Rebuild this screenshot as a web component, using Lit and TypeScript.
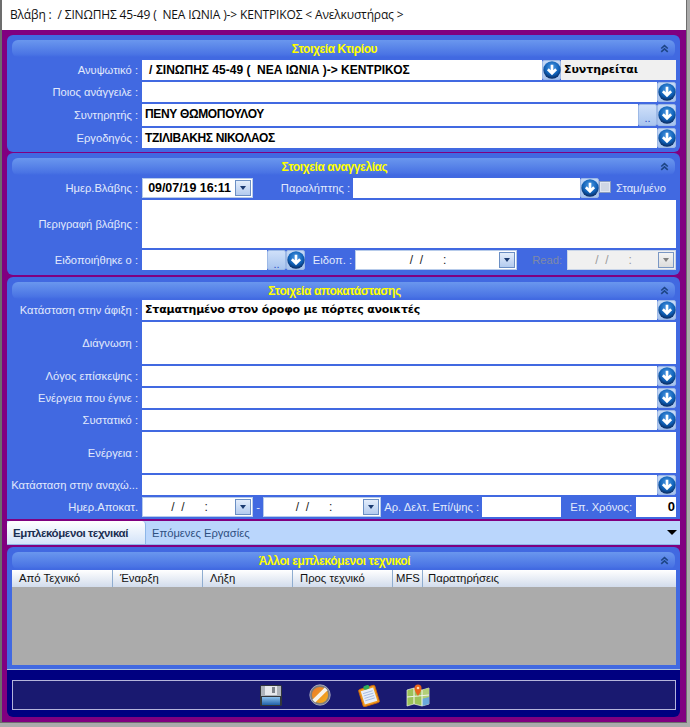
import { LitElement, html, css, svg } from "lit";
import { customElement } from "lit/decorators.js";

const down = () => html`<button class="round" tabindex="-1"><svg width="18" height="18" viewBox="0 0 17 17">
  <defs><radialGradient id="rb" cx="50%" cy="35%" r="65%"><stop offset="0" stop-color="#4a9ae6"/><stop offset=".65" stop-color="#0f5fb5"/><stop offset="1" stop-color="#0a2a60"/></radialGradient></defs>
  <circle cx="8.5" cy="8.5" r="8.2" fill="url(#rb)"/>
  <path d="M8.5 3.500v8M4.600 7.800l3.900 3.900 3.900-3.900" fill="none" stroke="#fff" stroke-width="2.500"/>
</svg></button>`;

const dots = () => html`<button class="dots" tabindex="-1">..</button>`;

const dateBox = (cls: string, text = "/  /      :", disabled = false) => html`
  <div class="date ${cls} ${disabled ? "off" : ""}">
    <span class="dtext">${text}</span>
    <span class="dbtn"><i></i></span>
  </div>`;

const chevrons = svg`<svg class="chev" width="9" height="9" viewBox="0 0 11 10"><path d="M1.500 5 5.500 1.500 9.500 5M1.500 9 5.500 5.500 9.500 9" fill="none" stroke="#1d4585" stroke-width="2"/></svg>`;

@customElement("app-root")
export class AppRoot extends LitElement {
  static styles = css`
    :host { display: block; width: 690px; height: 727px; background: #ababab; overflow: hidden;
      font-family: "Liberation Sans", Arial, sans-serif; font-size: 12px; }
    * { box-sizing: border-box; }
    .window { width: 687px; height: 723px; border-left: 2px solid #6d6d6d; border-right: 1px solid #6d6d6d; border-bottom: 1px solid #6d6d6d; background: #800080; display: flex; flex-direction: column; }
    .title { height: 30px; flex: none; background: #fff; color: #111; padding: 8px 0 0 8px; font-size: 12px; line-height: 14px; white-space: pre; font-family: "Open Sans", sans-serif; letter-spacing: -0.15px; }
    .body { padding: 5px 6px 6px 5px; display: flex; flex-direction: column; }
    .panel { background: #4169e1; border-radius: 6px 6px 6px 6px; padding: 5px 4px 4px 5px; display: flex; flex-direction: column; }
    .p1 { height: 117px; margin-bottom: 1px; }
    .p2 { height: 122px; margin-bottom: 2px; padding-bottom: 5px; }
    .p3 { height: 242px; margin-bottom: 2px; padding-bottom: 2px; border-radius: 6px 6px 0 0; }
    .p4 { height: 122px; border-radius: 6px 6px 0 0; margin-top: 1px; padding-bottom: 4px; }
    .head { height: 17px; flex: none; margin-right: 1px; padding-right: 18px; border-radius: 6px; background: linear-gradient(#6a97ee, #4a74e4 85%, #4169e1); display: flex; align-items: center; position: relative; justify-content: center; margin-bottom: 3px; }
    .p3 .head, .p4 .head { margin-bottom: 1px; }
    .head b { color: #ffff00; font: bold 12px "Liberation Sans", sans-serif; letter-spacing: -0.4px; }
    .chev { position: absolute; right: 6px; top: 4px; }
    .rows { display: flex; flex-direction: column; gap: 2px; }
    .row { display: flex; height: 20px; align-items: stretch; }
    .h22 { height: 22px; }
    .h42 { height: 42px; }
    .h40 { height: 41px; }
    .h48 { height: 48px; }
    .lbl { flex: none; white-space: pre; color: #e2e9fc; display: flex; align-items: center; justify-content: flex-end; font-family: "Liberation Sans", sans-serif; font-size: 11.2px; }
    .main { width: 130px; padding-right: 4px; }
    .gap3 { width: 100px; padding-right: 3px; }
    .gap-e { width: 50px; padding-right: 3px; }
    .read { width: 50px; padding-right: 5px; color: #7f8aa8; }
    .dash { width: 10px; justify-content: center; }
    .del { width: 101px; padding-right: 3px; }
    .epx { width: 75px; padding-right: 4px; }
    .check-l { padding-left: 5px; }
    .inp { flex: 1; min-width: 0; background: #fff; color: #000; font: bold 12px/20px "Liberation Sans", sans-serif; padding-left: 3px; white-space: pre; overflow: hidden; }
    .pad7 { padding-left: 7px; }
    .tight { letter-spacing: -0.35px; }
    .wide { font: bold 11px/20px "DejaVu Sans", sans-serif; letter-spacing: -0.2px; }
    .w227 { flex: none; width: 227px; }
    .w125 { flex: none; width: 125px; }
    .w79 { flex: none; width: 79px; }
    .num { text-align: right; padding-right: 1px; font-size: 13px; }
    .round { flex: none; width: 19px; padding: 0; border: 1px solid #9db9e6; border-radius: 2px; background: linear-gradient(#c4d8f6, #a7c3ee); display: flex; align-items: center; justify-content: center; overflow: visible; }
    .round svg { flex: none; }
    .dots { flex: none; width: 19px; padding: 6px 0 0; border: 1px solid #9db9e6; border-radius: 2px; background: linear-gradient(#cfe0f9, #a9c5ef); color: #2a4fc4; font: 11px/14px "Liberation Sans", sans-serif; }
    .status { width: 115px; flex: none; background: #f0f0f0; color: #000; font: bold 11px/20px "DejaVu Sans", sans-serif; padding-left: 3px; letter-spacing: -0.05px; }
    .date { flex: none; display: flex; align-items: stretch; background: #fff; border: 1px solid #b7cbea; padding: 1px; }
    .dtext { flex: 1; text-align: center; white-space: pre; color: #222; font: 12px/16px "Liberation Sans", sans-serif; }
    .dbtn { width: 16px; flex: none; border: 1px solid #6b8fc4; background: linear-gradient(#e3edfb, #b3cbef); display: flex; align-items: center; justify-content: center; }
    .dbtn i { width: 0; height: 0; border-left: 3.5px solid transparent; border-right: 3.5px solid transparent; border-top: 4px solid #1b3a70; }
    .date.off { background: #f0f0f0; border-color: #c8d4e8; }
    .date.off .dtext { color: #9a9a9a; }
    .date.off .dbtn { background: linear-gradient(#f4f4f4, #dcdcdc); border-color: #7a97c4; }
    .date.off .dbtn i { border-top-color: #808080; }
    .d1 { width: 111px; }
    .d1 .dtext { font-weight: bold; color: #000; font-size: 12.5px; letter-spacing: -0.05px; }
    .d2 { width: 162px; }
    .d3 { width: 109px; }
    .d4 { width: 111px; }
    .d5 { width: 118px; }
    .check { flex: none; width: 12px; height: 12px; margin: 3px 0 0 0; background: #cfd6e4; border: 2px solid #e2e7f1; outline: 1px solid #8a9cc0; outline-offset: -1px; }
    .tabs { height: 24px; flex: none; background: #bad6fc; display: flex; align-items: stretch; border-bottom: 1px solid #8db6e8; position: relative; margin-bottom: 1px; }
    .tab1 { width: 139px; border-radius: 4px 4px 0 0; background: linear-gradient(#fff, #d3e3f9); border-right: 1px solid #8db6e8; color: #1b2f52; font: bold 11.5px/24px "Liberation Sans", sans-serif; padding-left: 6px; letter-spacing: -0.4px; white-space: pre; }
    .tab2 { color: #2f4f80; font: 11.2px/24px "Liberation Sans", sans-serif; padding-left: 6px; }
    .tri { position: absolute; right: 3px; top: 9px; width: 0; height: 0; border-left: 5px solid transparent; border-right: 5px solid transparent; border-top: 5px solid #000; }
    .ghead { height: 17px; flex: none; display: flex; background: linear-gradient(#fff, #d2dcec); }
    .ghead span { flex: none; border-right: 1px solid #8fadd0; color: #111; padding-left: 7px; font: 11.3px/17px "Liberation Sans", sans-serif; white-space: pre; }
    .ghead span:last-child { flex: 1; border-right: none; padding-left: 5px; }
    .c101 { width: 101px; }
    .c90 { width: 90px; }
    .c100 { width: 100px; }
    .ghead .c30 { width: 30px; padding-left: 3px; }
    .gbody { flex: 1; background: #ababab; }
    .foot { height: 48px; flex: none; background: #000080; border-top: 1px solid #b0c4de; border-radius: 0 0 6px 6px; padding: 10px 4px 0 5px; }
    .bar { height: 30px; background: #191970; border: 1px solid #b4b4dc; display: flex; justify-content: center; align-items: center; gap: 25px; }
    .bar svg { display: block; }
  `;

  private head(t: string) {
    return html`<div class="head"><b>${t}</b>${chevrons}</div>`;
  }

  render() {
    return html`
    <div class="window">
      <div class="title">Βλάβη :  / ΣΙΝΩΠΗΣ 45-49 (  ΝΕΑ ΙΩΝΙΑ )-> ΚΕΝΤΡΙΚΟΣ < Ανελκυστήρας ></div>
      <div class="body">
        <section class="panel p1">
          ${this.head("Στοιχεία Κτιρίου")}
          <div class="rows">
            <div class="row"><span class="lbl main">Ανυψωτικό :</span><div class="inp pad7">/ ΣΙΝΩΠΗΣ 45-49 (  ΝΕΑ ΙΩΝΙΑ )-> ΚΕΝΤΡΙΚΟΣ</div>${down()}<div class="status">Συντηρείται</div></div>
            <div class="row"><span class="lbl main">Ποιος ανάγγειλε :</span><div class="inp"></div>${down()}</div>
            <div class="row h22"><span class="lbl main">Συντηρητής :</span><div class="inp tight">ΠΕΝΥ ΘΩΜΟΠΟΥΛΟΥ</div>${dots()}${down()}</div>
            <div class="row"><span class="lbl main">Εργοδηγός :</span><div class="inp tight">ΤΖΙΛΙΒΑΚΗΣ ΝΙΚΟΛΑΟΣ</div>${down()}</div>
          </div>
        </section>
        <section class="panel p2">
          ${this.head("Στοιχεία αναγγελίας")}
          <div class="rows">
            <div class="row">
              <span class="lbl main">Ημερ.Βλάβης :</span>
              ${dateBox("d1", "09/07/19 16:11")}
              <span class="lbl gap3">Παραλήπτης :</span>
              <div class="inp w227"></div>${down()}
              <span class="check"></span>
              <span class="lbl check-l">Σταμ/μένο</span>
            </div>
            <div class="row h48"><span class="lbl main">Περιγραφή βλάβης :</span><div class="inp"></div></div>
            <div class="row">
              <span class="lbl main">Ειδοποιήθηκε ο :</span>
              <div class="inp w125"></div>${dots()}${down()}
              <span class="lbl gap-e">Ειδοπ. :</span>
              ${dateBox("d2")}
              <span class="lbl read">Read:</span>
              ${dateBox("d3", "/  /      :", true)}
            </div>
          </div>
        </section>
        <section class="panel p3">
          ${this.head("Στοιχεία αποκατάστασης")}
          <div class="rows">
            <div class="row"><span class="lbl main">Κατάσταση στην άφιξη :</span><div class="inp wide">Σταματημένο στον όροφο με πόρτες ανοικτές</div>${down()}</div>
            <div class="row h42"><span class="lbl main">Διάγνωση :</span><div class="inp"></div></div>
            <div class="row"><span class="lbl main">Λόγος επίσκεψης :</span><div class="inp"></div>${down()}</div>
            <div class="row"><span class="lbl main">Ενέργεια που έγινε :</span><div class="inp"></div>${down()}</div>
            <div class="row"><span class="lbl main">Συστατικό :</span><div class="inp"></div>${down()}</div>
            <div class="row h40"><span class="lbl main">Ενέργεια :</span><div class="inp"></div></div>
            <div class="row"><span class="lbl main">Κατάσταση στην αναχώ...</span><div class="inp"></div>${down()}</div>
            <div class="row">
              <span class="lbl main">Ημερ.Αποκατ.</span>
              ${dateBox("d4", "/  /      :")}
              <span class="lbl dash">-</span>
              ${dateBox("d5")}
              <span class="lbl del">Αρ. Δελτ. Επί/ψης :</span>
              <div class="inp w79"></div>
              <span class="lbl epx">Επ. Χρόνος:</span>
              <div class="inp num">0</div>
            </div>
          </div>
        </section>
        <div class="tabs">
          <div class="tab1">Εμπλεκόμενοι τεχνικαί</div>
          <div class="tab2">Επόμενες Εργασίες</div>
          <span class="tri"></span>
        </div>
        <section class="panel p4">
          ${this.head("Άλλοι εμπλεκόμενοι τεχνικοί")}
          <div class="ghead">
            <span class="c101">Από Τεχνικό</span>
            <span class="c90">Έναρξη</span>
            <span class="c90">Λήξη</span>
            <span class="c100">Προς τεχνικό</span>
            <span class="c30">MFS</span>
            <span>Παρατηρήσεις</span>
          </div>
          <div class="gbody"></div>
        </section>
        <div class="foot">
          <div class="bar">
            <svg width="24" height="24" viewBox="0 0 24 24">
              <defs><linearGradient id="fl" x1="0" y1="0" x2="0" y2="1"><stop offset="0" stop-color="#8cc2ee"/><stop offset="1" stop-color="#1f5fa8"/></linearGradient></defs>
              <rect x="1" y="2" width="22" height="21" rx="1.500" fill="#32363c"/>
              <rect x="2" y="3" width="20" height="10" fill="#aeb3ba"/>
              <rect x="6" y="3" width="12" height="9" fill="#e6e8ec"/>
              <rect x="13" y="4" width="3" height="6" fill="#7d828a"/>
              <rect x="3" y="14" width="18" height="8" fill="url(#fl)"/>
            </svg>
            <svg width="24" height="24" viewBox="0 0 24 24">
              <defs><linearGradient id="og" x1="0" y1="0" x2="1" y2="1"><stop offset="0" stop-color="#e8742a"/><stop offset="1" stop-color="#f6b51c"/></linearGradient></defs>
              <circle cx="12" cy="12" r="9" fill="url(#og)" stroke="#7d7d7d" stroke-width="1.800"/>
              <circle cx="12" cy="12" r="10.200" fill="none" stroke="#dcdcdc" stroke-width=".7"/>
              <path d="M5.800 18.200 18.200 5.800" stroke="#f7f3ea" stroke-width="4"/>
            </svg>
            <svg width="24" height="24" viewBox="0 0 24 24">
              <g transform="rotate(-17 12 13)">
                <rect x="3.500" y="4" width="17" height="18" rx="1.500" fill="#ef9a1e" stroke="#c8620c" stroke-width=".8"/>
                <rect x="5.500" y="6" width="13" height="14" fill="#e6eefa"/>
                <path d="M7 9h10M7 11.500h10M7 14h10M7 16.500h10" stroke="#9fb4dc" stroke-width=".8"/>
                <rect x="9" y="2" width="6" height="4" rx="1.500" fill="#2fae5a"/>
              </g>
            </svg>
            <svg width="24" height="24" viewBox="0 0 24 24">
              <path d="M1 7 8 5l8 2 7-2v16l-7 2-8-2-7 2z" fill="#9cc25a" stroke="#eef3e4" stroke-width=".7"/>
              <path d="M16 7l7-2v9l-7 2z" fill="#b2cf78"/>
              <path d="M16 16l7-2v7l-7 2z" fill="#6aa9dc"/>
              <path d="M1 14 23 12M8 5v16M16 7v16" stroke="#eef2e8" stroke-width="1.100"/>
              <path d="M12 13C9 8.500 8.500 7 8.500 5a3.500 3.500 0 0 1 7 0C15.500 7 15 8.500 12 13z" fill="#e8641c"/>
              <circle cx="12" cy="5" r="1.300" fill="#ffd9a8"/>
            </svg>
          </div>
        </div>
      </div>
    </div>`;
  }
}
